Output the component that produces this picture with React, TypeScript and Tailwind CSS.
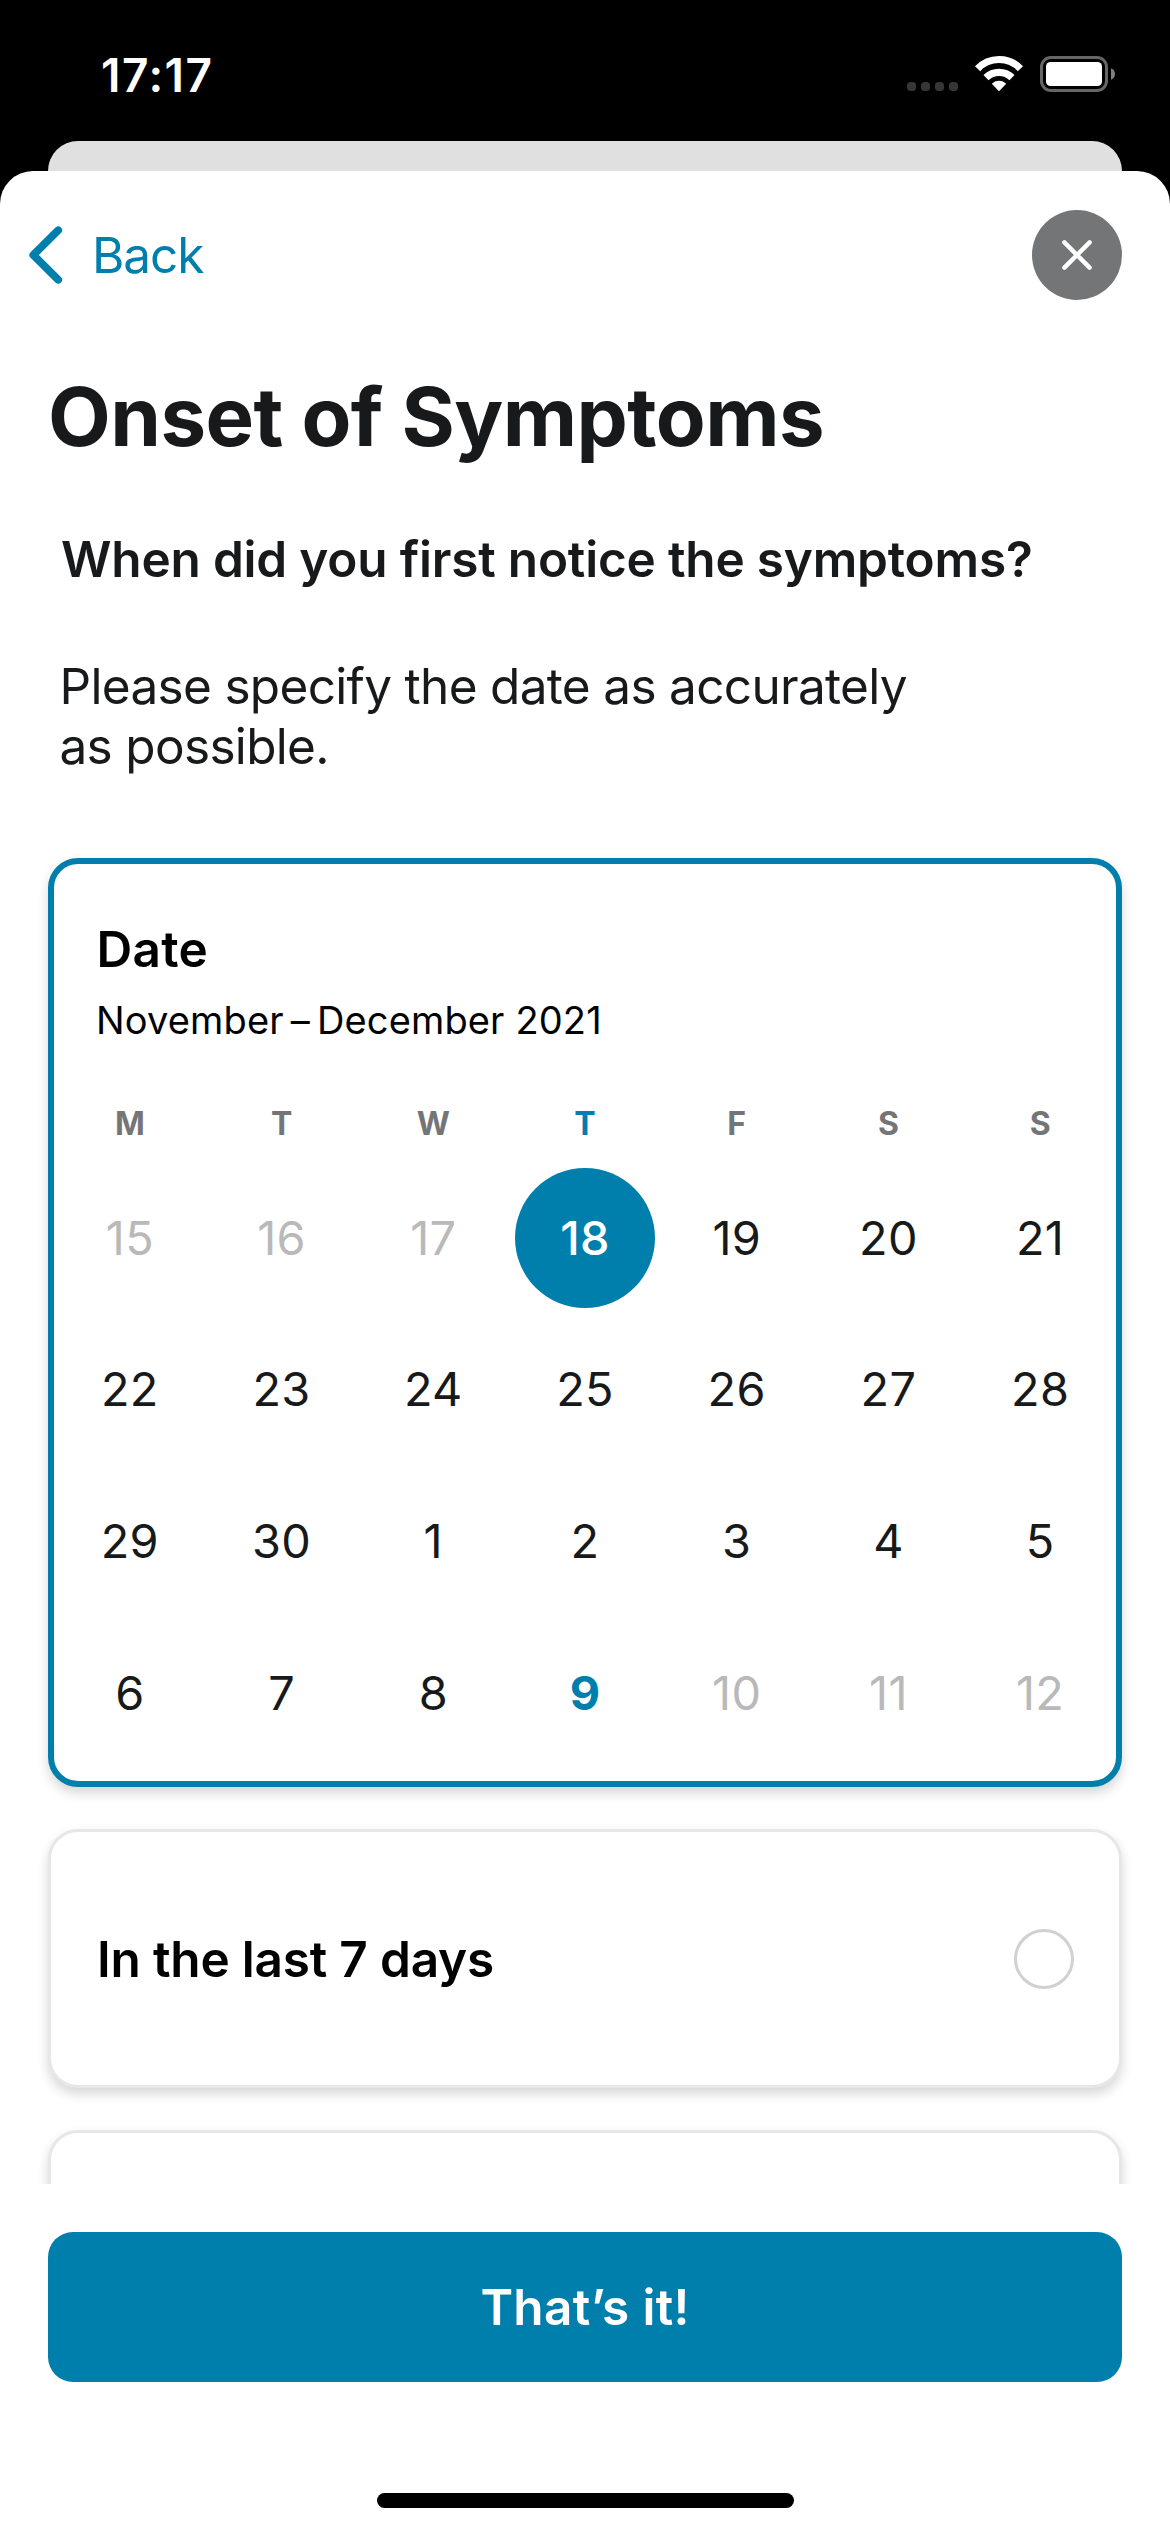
import { clsx } from "clsx";

type DayState = "disabled" | "selected" | "normal" | "today";

const WEEKDAYS = ["M", "T", "W", "T", "F", "S", "S"];

const DAYS: { label: number; state: DayState }[] = [
  15, 16, 17, 18, 19, 20, 21, 22, 23, 24, 25, 26, 27, 28, 29, 30, 1, 2, 3, 4, 5, 6, 7, 8, 9, 10, 11, 12,
].map((label, i) => ({
  label,
  state: i < 3 || i > 24 ? "disabled" : i === 3 ? "selected" : i === 24 ? "today" : "normal",
}));

function StatusBar() {
  return (
    <div className="flex h-[141px] items-start justify-between pl-[101px] pr-[55px]">
      <span className="mt-[45px] text-[46px] leading-[60px] font-semibold tracking-[1.5px] text-white">17:17</span>
      <div className="mt-[54px] flex items-start">
        <div className="mt-[28px] flex gap-[5px]">
          {[0, 1, 2, 3].map((i) => (
            <span key={i} className="size-[9px] rounded-[3.5px] bg-[#363636]" />
          ))}
        </div>
        <svg className="ml-[17px]" width="48" height="38" viewBox="0 0 48 38" fill="none">
          <path d="M2.6 14.7A29.5 29.5 0 0 1 45.4 14.7" stroke="white" strokeWidth="7.2" />
          <path d="M11 23.6A18.6 18.6 0 0 1 37 23.6" stroke="white" strokeWidth="7.2" />
          <path d="M24 36.2L17.8 29.7A10 10 0 0 1 30.2 29.7Z" fill="white" stroke="white" strokeWidth="1.4" strokeLinejoin="round" />
        </svg>
        <svg className="ml-[17px]" width="75" height="38" viewBox="0 0 75 38" fill="none">
          <rect x="1.5" y="3.5" width="65" height="33" rx="9.5" stroke="#666666" strokeWidth="3" />
          <rect x="6" y="8" width="56" height="24" rx="4.5" fill="white" />
          <path d="M71 14.3C73.6 15.3 75 17.5 75 20S73.6 24.7 71 25.7Z" fill="#808080" />
        </svg>
      </div>
    </div>
  );
}

function SheetHeader() {
  return (
    <div className="flex h-[168px] items-center justify-between pr-[48px] pl-[28px]">
      <button className="flex items-center text-[#007fad]">
        <svg width="36" height="58" viewBox="0 0 36 58" fill="none">
          <path d="M30.2 4.3L5.3 29L30.2 53.7" stroke="currentColor" strokeWidth="7.8" strokeLinecap="round" strokeLinejoin="round" />
        </svg>
        <span className="ml-[28px] text-[49.5px] leading-[60px] tracking-[-1.1px]">Back</span>
      </button>
      <button className="flex size-[90px] items-center justify-center rounded-full bg-[#747577]">
        <svg width="32" height="32" viewBox="0 0 32 32" fill="none">
          <path d="M3.4 3.4L28.6 28.6M28.6 3.4L3.4 28.6" stroke="white" strokeWidth="4.4" strokeLinecap="round" />
        </svg>
      </button>
    </div>
  );
}

function DateCard() {
  return (
    <section className="h-[929px] shrink-0 rounded-[30px] border-6 border-[#007fad] bg-white pt-[55px] shadow-[0_6px_12px_rgba(0,0,0,0.16)]">
      <h3 className="pl-[42.5px] text-[49.5px] leading-[60px] font-semibold tracking-[0.28px] text-black">Date</h3>
      <p className="mt-4 pl-[42px] text-[38px] leading-[50px] tracking-[0.15px] whitespace-nowrap text-black">
        {"November\u2009–\u2009December 2021"}
      </p>
      <div className="mt-[58px] grid grid-cols-7 text-center text-[32px] leading-[41px] font-bold text-[#747577]">
        {WEEKDAYS.map((d, i) => (
          <span key={i} className={clsx(i === 3 && "text-[#007fad]")}>
            {d}
          </span>
        ))}
      </div>
      <div className="mt-[18px] grid auto-rows-[151.7px] grid-cols-7">
        {DAYS.map(({ label, state }) => (
          <div key={label} className="flex items-center justify-center">
            <span
              className={clsx(
                "flex size-[140px] items-center justify-center rounded-full text-[46.8px] tracking-[0.3px]",
                state === "disabled" && "text-[#b9b9b9]",
                state === "normal" && "text-[#17191a]",
                state === "today" && "font-bold text-[#007fad]",
                state === "selected" && "bg-[#007fad] font-medium text-white",
              )}
            >
              {label}
            </span>
          </div>
        ))}
      </div>
    </section>
  );
}

function OptionCard({ label }: { label?: string }) {
  return (
    <section className="flex h-[259px] shrink-0 items-center justify-between rounded-[30px] border-3 border-[#e7e7e7] bg-white pr-[45px] pl-[46px] shadow-[0_6px_12px_rgba(0,0,0,0.16)]">
      {label && (
        <>
          <span className="text-[49.5px] leading-[60px] font-semibold tracking-[-0.19px] text-black">{label}</span>
          <span className="size-[60px] rounded-full border-3 border-[#d1d1d1]" />
        </>
      )}
    </section>
  );
}

export default function App() {
  return (
    <div className="flex h-[2532px] w-[1170px] flex-col overflow-hidden bg-black font-['Inter',sans-serif]">
      <StatusBar />
      <div className="mx-[48px] h-[30px] rounded-t-[30px] bg-[#e0e0e0]" />
      <main className="flex flex-1 flex-col rounded-t-[33px] bg-white">
        <SheetHeader />
        <div className="flex h-[1845px] shrink-0 flex-col overflow-hidden px-[48px] text-[#17191a]">
          <h1 className="mt-[28px] text-[81.5px] leading-[100px] font-bold tracking-[-0.57px] whitespace-nowrap">
            Onset of Symptoms
          </h1>
          <h2 className="mt-[62px] pl-[13px] text-[49.5px] leading-[60px] font-semibold tracking-[-0.19px] whitespace-nowrap">
            When did you first notice the symptoms?
          </h2>
          <p className="mt-[67px] mb-[82px] pl-[11.5px] text-[49.5px] leading-[60px] tracking-[-0.68px]">
            Please specify the date as accurately
            <br />
            as possible.
          </p>
          <div className="flex flex-col gap-[42px]">
            <DateCard />
            <OptionCard label="In the last 7 days" />
            <OptionCard />
          </div>
        </div>
        <div className="flex flex-col items-center px-[48px] pt-[48px]">
          <button className="h-[150px] w-full rounded-[25px] bg-[#007fad] pt-px text-[49.5px] font-semibold tracking-[0.3px] text-white">
            That’s it!
          </button>
          <div className="mt-[111px] h-[15px] w-[417px] rounded-full bg-black" />
        </div>
      </main>
    </div>
  );
}
